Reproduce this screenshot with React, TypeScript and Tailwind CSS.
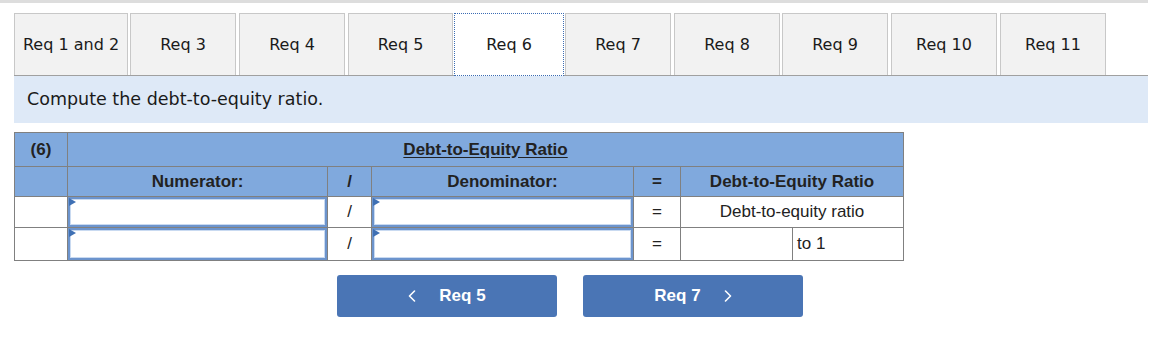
const tabs = [
    { label: 'Req 1 and 2', cls: 'w-[114px] ml-0' },
    { label: 'Req 3', cls: 'w-[106px] ml-[2px]' },
    { label: 'Req 4', cls: 'w-[106px] ml-[3px]' },
    { label: 'Req 5', cls: 'w-[105px] ml-[3px]' },
    { label: 'Req 6', cls: 'w-[110px] ml-[1px]', active: true },
    { label: 'Req 7', cls: 'w-[106px] ml-[1px]' },
    { label: 'Req 8', cls: 'w-[106px] ml-[3px]' },
    { label: 'Req 9', cls: 'w-[106px] ml-[2px]' },
    { label: 'Req 10', cls: 'w-[106px] ml-[3px]' },
    { label: 'Req 11', cls: 'w-[106px] ml-[3px]' },
];

// blue bordered answer box with the little marker in the corner
function AnswerBox() {
    return (
        <div className="relative h-full border-2 border-[#6c94cd] bg-white shadow-[inset_0_0_0_1px_#c9daf1]">
            <span className="absolute left-[-1px] top-[-1px] h-0 w-0 border-y-[4px] border-l-[7px] border-y-transparent border-l-[#3f70b4]" />
        </div>
    );
}

function Chevron({ dir }: { dir: 'left' | 'right' }) {
    return (
        <svg width="8" height="12" viewBox="0 0 8 12" fill="none">
            <polyline
                points={dir === 'left' ? '6.5,1 1.5,6 6.5,11' : '1.5,1 6.5,6 1.5,11'}
                stroke="white"
                strokeWidth="1.6"
                strokeLinecap="round"
                strokeLinejoin="round"
            />
        </svg>
    );
}

export default function App() {
    return (
        <div className="h-[352px] w-[1176px] bg-white">
            <div className="w-[1148px] border-t-[3px] border-[#dddddd]">
                <div className="pl-[14px]">
                    {/* Tabs */}
                    <div className="mt-[10px] flex items-end border-b border-[#a0a0a0] font-['DejaVu_Sans',Verdana,sans-serif] text-[16px] text-[#1a1a1a]">
                        {tabs.map((tab) =>
                            tab.active ? (
                                <div
                                    key={tab.label}
                                    className={`${tab.cls} -mb-px flex h-[63px] items-center justify-center border border-dotted border-[#3b6cb3] bg-white`}
                                >
                                    {tab.label}
                                </div>
                            ) : (
                                <div
                                    key={tab.label}
                                    className={`${tab.cls} flex h-[62px] items-center justify-center border border-b-0 border-[#c8c8c8] bg-[#f2f2f2]`}
                                >
                                    {tab.label}
                                </div>
                            )
                        )}
                    </div>

                    {/* Instruction */}
                    <div className="flex h-[47px] items-center bg-[#dee9f7] pl-[13px] font-['DejaVu_Sans',Verdana,sans-serif] text-[17.5px] text-[#1a1a1a]">
                        Compute the debt-to-equity ratio.
                    </div>

                    {/* Worksheet */}
                    <table className="mt-[9px] w-[889px] table-fixed border-collapse font-['Liberation_Sans',Arial,sans-serif] text-[17px] text-[#222]">
                        <colgroup>
                            <col className="w-[53px]" />
                            <col className="w-[260px]" />
                            <col className="w-[44px]" />
                            <col className="w-[262px]" />
                            <col className="w-[47px]" />
                            <col className="w-[112px]" />
                            <col className="w-[111px]" />
                        </colgroup>
                        <tbody>
                            <tr className="h-[34px] bg-[#80a9dd] font-bold">
                                <td className="border border-[#808080] text-center">(6)</td>
                                <td colSpan={6} className="border border-[#808080] text-center">
                                    <span className="underline underline-offset-2">Debt-to-Equity Ratio</span>
                                </td>
                            </tr>
                            <tr className="h-[30px] bg-[#80a9dd] font-bold">
                                <td className="border border-[#808080]" />
                                <td className="border border-[#808080] text-center">Numerator:</td>
                                <td className="border border-[#808080] text-center">/</td>
                                <td className="border border-[#808080] text-center">Denominator:</td>
                                <td className="border border-[#808080] text-center">=</td>
                                <td colSpan={2} className="border border-[#808080] text-center">
                                    Debt-to-Equity Ratio
                                </td>
                            </tr>
                            <tr className="h-[31px]">
                                <td className="border border-[#808080]" />
                                <td className="h-[31px] border border-[#808080] p-0">
                                    <AnswerBox />
                                </td>
                                <td className="border border-[#808080] text-center">/</td>
                                <td className="h-[31px] border border-[#808080] p-0">
                                    <AnswerBox />
                                </td>
                                <td className="border border-[#808080] text-center">=</td>
                                <td colSpan={2} className="border border-[#808080] text-center">
                                    Debt-to-equity ratio
                                </td>
                            </tr>
                            <tr className="h-[33px]">
                                <td className="border border-[#808080]" />
                                <td className="h-[33px] border border-[#808080] p-0">
                                    <AnswerBox />
                                </td>
                                <td className="border border-[#808080] text-center">/</td>
                                <td className="h-[33px] border border-[#808080] p-0">
                                    <AnswerBox />
                                </td>
                                <td className="border border-[#808080] text-center">=</td>
                                <td className="border border-[#808080]" />
                                <td className="border border-[#808080] pl-[4px] text-left">to 1</td>
                            </tr>
                        </tbody>
                    </table>

                    {/* Prev / next */}
                    <div className="ml-[323px] mt-[14px] flex gap-[26px] font-['Liberation_Sans',Arial,sans-serif] text-[17px] font-bold text-white">
                        <button className="flex h-[42px] w-[220px] items-center justify-center gap-[23px] rounded-[3px] bg-[#4a75b5]">
                            <Chevron dir="left" />
                            <span>Req 5</span>
                        </button>
                        <button className="flex h-[42px] w-[220px] items-center justify-center gap-[23px] rounded-[3px] bg-[#4a75b5]">
                            <span>Req 7</span>
                            <Chevron dir="right" />
                        </button>
                    </div>
                </div>
            </div>
        </div>
    );
}
